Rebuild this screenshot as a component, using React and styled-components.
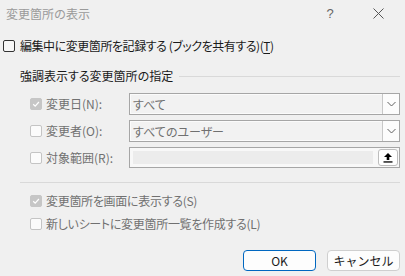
import React from "react"
import styled, { createGlobalStyle } from "styled-components"

const GlobalStyle = createGlobalStyle`
  html, body {
    margin: 0;
    padding: 0;
    background: #f0f0f0;
  }
  body {
    font-family: "Noto Sans CJK JP", "Noto Sans", sans-serif;
    font-size: 12px;
    color: #1a1a1a;
    font-feature-settings: "palt";
  }
`

const Check = ({ checked, disabled }) => (
  <Box checked={checked} disabled={disabled}>
    {checked &&
      <svg width="10" height="10" viewBox="0 0 10 10">
        <path d="M2.2 5.2 L4.2 7.1 L7.9 3" fill="none" stroke="#fff" strokeWidth="1.2" />
      </svg>
    }
  </Box>
)

const Chevron = () => (
  <svg width="9" height="6" viewBox="0 0 9 6">
    <path d="M0.5 1 L4.5 5 L8.5 1" fill="none" stroke="#606060" strokeWidth="1" />
  </svg>
)

const UploadIcon = () => (
  <svg width="10" height="11" viewBox="0 0 10 11">
    <path d="M5 1 L9 5 L6.3 5 L6.3 8 L3.7 8 L3.7 5 L1 5 Z" fill="#000" />
    <rect x="0.5" y="9.3" width="9" height="1.3" fill="#000" />
  </svg>
)

const App = () => {
  return (
    <>
      <GlobalStyle />
      <Dialog>
        <TitleBar>
          <Title>変更箇所の表示</Title>
          <TitleButtons>
            <Help>?</Help>
            <Close>
              <svg width="11" height="11" viewBox="0 0 11 11">
                <path d="M0.5 0.5 L10.5 10.5 M10.5 0.5 L0.5 10.5" stroke="#555" strokeWidth="1" />
              </svg>
            </Close>
          </TitleButtons>
        </TitleBar>

        <TopCheck>
          <Check />
          <span>編集中に変更箇所を記録する (ブックを共有する)(<u>T</u>)</span>
        </TopCheck>

        <Group>
          <GroupHeader>
            <span>強調表示する変更箇所の指定</span>
            <Rule />
          </GroupHeader>

          <FieldRow>
            <RowLabel>
              <Check checked disabled />
              <Muted>変更日(N):</Muted>
            </RowLabel>
            <Combo>
              <ComboText>すべて</ComboText>
              <DropButton><Chevron /></DropButton>
            </Combo>
          </FieldRow>

          <FieldRow gap={5}>
            <RowLabel>
              <Check disabled />
              <Muted>変更者(O):</Muted>
            </RowLabel>
            <Combo>
              <ComboText>すべてのユーザー</ComboText>
              <DropButton><Chevron /></DropButton>
            </Combo>
          </FieldRow>

          <FieldRow gap={5}>
            <RowLabel>
              <Check disabled />
              <Muted>対象範囲(R):</Muted>
            </RowLabel>
            <RangeField>
              <RangeInner />
              <PickButton><UploadIcon /></PickButton>
            </RangeField>
          </FieldRow>

          <Separator />

          <OptionRow>
            <Check checked disabled />
            <Muted tight>変更箇所を画面に表示する(S)</Muted>
          </OptionRow>
          <OptionRow>
            <Check disabled />
            <Muted tight>新しいシートに変更箇所一覧を作成する(L)</Muted>
          </OptionRow>
        </Group>

        <Footer>
          <Button primary>OK</Button>
          <Button>キャンセル</Button>
        </Footer>
      </Dialog>
    </>
  )
}

export default App


const Dialog = styled.div`
  width: 405px;
  height: 276px;
  background: #f0f0f0;
  display: flex;
  flex-direction: column;
  box-sizing: border-box;
`

const TitleBar = styled.div`
  height: 27px;
  display: flex;
  align-items: center;
  justify-content: space-between;
  padding-left: 6px;
`

const Title = styled.div`
  color: #9a9a9a;
  line-height: 14px;
  font-feature-settings: normal;
`

const TitleButtons = styled.div`
  display: flex;
  align-items: center;
  height: 100%;
`

const Help = styled.div`
  width: 46px;
  text-align: center;
  color: #666;
  font-family: "Liberation Sans", sans-serif;
  font-size: 13px;
  margin-right: 2px;
`

const Close = styled.div`
  width: 46px;
  display: flex;
  justify-content: center;
  padding-right: 4px;
`

const Box = styled.span`
  width: 12px;
  height: 12px;
  box-sizing: border-box;
  border-radius: 2px;
  flex-shrink: 0;
  display: inline-flex;
  align-items: center;
  justify-content: center;
  border: 1px solid ${p => p.checked ? '#c6c6c6' : (p.disabled ? '#c4c4c4' : '#333')};
  background: ${p => p.checked ? '#c6c6c6' : (p.disabled ? '#fbfbfb' : '#f7f7f7')};
`

const TopCheck = styled.label`
  display: flex;
  align-items: center;
  gap: 5px;
  margin-top: 12px;
  padding-left: 3px;
  height: 14px;
  line-height: 14px;
  letter-spacing: -0.45px;

  u {
    text-underline-offset: 2px;
  }
`

const Group = styled.div`
  padding-left: 20px;
  padding-right: 5px;
  margin-top: 16px;
`

const GroupHeader = styled.div`
  display: flex;
  align-items: center;
  gap: 6px;
  line-height: 14px;
  height: 14px;
`

const Rule = styled.div`
  flex: 1;
  height: 1px;
  background: #d9d9d9;
`

const FieldRow = styled.div`
  display: flex;
  align-items: center;
  margin-top: ${p => p.gap || 10}px;
  padding-left: 10px;
`

const RowLabel = styled.div`
  width: 99px;
  display: flex;
  align-items: center;
  gap: 4px;
`

const Muted = styled.span`
  color: #707070;
  line-height: 14px;
  letter-spacing: ${p => p.tight ? '-0.3px' : 'normal'};
`

const Combo = styled.div`
  flex: 1;
  height: 22px;
  box-sizing: border-box;
  border: 1px solid #a6a6a6;
  box-shadow: inset 0 0 0 1px #fbfbfb;
  background: #f2f2f2;
  display: flex;
  align-items: stretch;
`

const ComboText = styled.div`
  flex: 1;
  display: flex;
  align-items: center;
  padding-left: 3px;
  color: #707070;
`

const DropButton = styled.div`
  width: 16px;
  border-left: 1px solid #c8c8c8;
  background: #fcfcfc;
  display: flex;
  align-items: center;
  justify-content: center;
`

const RangeField = styled.div`
  flex: 1;
  height: 21px;
  box-sizing: border-box;
  border: 1px solid #a6a6a6;
  background: #f8f8f8;
  display: flex;
  align-items: center;
  padding: 0 1px 0 3px;
  gap: 5px;
`

const RangeInner = styled.div`
  flex: 1;
  height: 13px;
  background: #ececec;
`

const PickButton = styled.div`
  width: 20px;
  height: 17px;
  box-sizing: border-box;
  border: 1px solid #bdbdbd;
  border-radius: 3px;
  background: #fff;
  display: flex;
  align-items: center;
  justify-content: center;
`

const Separator = styled.div`
  height: 1px;
  background: #d9d9d9;
  margin-top: 14px;
`

const OptionRow = styled.div`
  display: flex;
  align-items: center;
  gap: 4px;
  padding-left: 10px;
  height: 14px;
  margin-top: 11px;

  & + & {
    margin-top: 9px;
  }
`

const Footer = styled.div`
  display: flex;
  justify-content: flex-end;
  gap: 11px;
  padding-right: 5px;
  margin-top: auto;
  margin-bottom: 5px;
`

const Button = styled.button`
  width: 73px;
  height: 21px;
  box-sizing: border-box;
  background: #fdfdfd;
  border: 1px solid ${p => p.primary ? '#0067c0' : '#cfcfcf'};
  border-radius: 4px;
  font-family: "Noto Sans CJK JP", "Noto Sans", sans-serif;
  font-size: 12px;
  color: #1a1a1a;
  line-height: 14px;
  padding: 0;
`
